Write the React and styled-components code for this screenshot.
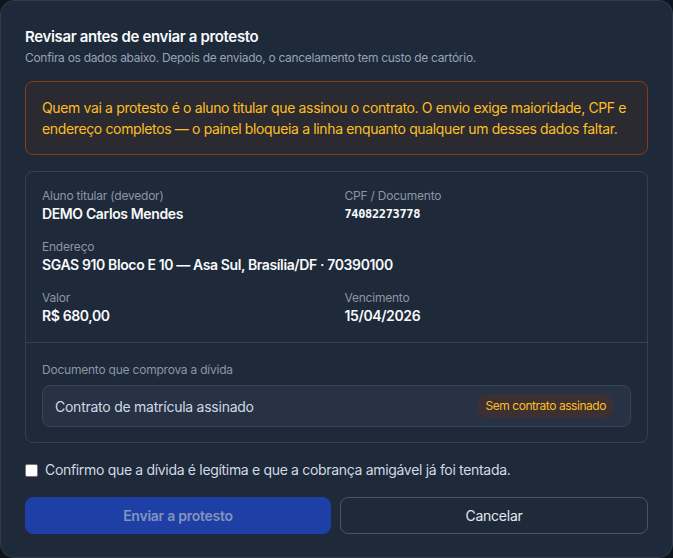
import React from "react";
import styled, { createGlobalStyle } from "styled-components";

const Global = createGlobalStyle`
  html, body {
    margin: 0;
    padding: 0;
    background: #0f141d;
  }
  body {
    font-family: Inter, "Noto Sans", sans-serif;
  }
  * { box-sizing: border-box; }
`;

const Dialog = styled.div`
  width: 673px;
  height: 558px;
  background: #1e2939;
  border: 1px solid #2f3b4d;
  border-radius: 14px;
  padding: 26px 24px 24px;
  display: flex;
  flex-direction: column;
`;

const Title = styled.h2`
  margin: 0;
  font-size: 15px;
  line-height: 20px;
  font-weight: 600;
  color: #f8fafc;
  letter-spacing: -0.35px;
`;

const Subtitle = styled.p`
  margin: 3px 0 0;
  font-size: 12px;
  line-height: 16px;
  color: #94a3b8;
  letter-spacing: -0.3px;
`;

const Warning = styled.div`
  margin-top: 15px;
  padding: 15px 8px 15px 16px;
  border: 1px solid #8a3b12;
  background: #2c2a31;
  border-radius: 8px;
  color: #fbbf24;
  font-size: 14px;
  line-height: 21px;
  letter-spacing: -0.36px;
`;

const Card = styled.div`
  margin-top: 16px;
  border: 1px solid #334155;
  border-radius: 8px;
`;

const Grid = styled.div`
  display: grid;
  grid-template-columns: 1fr 1fr;
  column-gap: 16px;
  row-gap: 15px;
  padding: 16px;
  border-bottom: 1px solid #334155;
`;

const Field = styled.div`
  grid-column: ${(p) => (p.$wide ? "1 / -1" : "auto")};
  display: flex;
  flex-direction: column;
`;

const Label = styled.span`
  font-size: 12px;
  line-height: 16px;
  color: #8a96a8;
  letter-spacing: -0.22px;
`;

const Value = styled.span`
  font-size: 14px;
  line-height: 20px;
  font-weight: 600;
  color: #f8fafc;
  letter-spacing: -0.38px;
  ${(p) =>
    p.$mono &&
    `font-family: "DejaVu Sans Mono", monospace;
     font-size: 12px;
     font-weight: 700;
     letter-spacing: -0.35px;`}
`;

const DocSection = styled.div`
  padding: 15px 16px;
`;

const DocBox = styled.div`
  margin-top: 7px;
  height: 42px;
  display: flex;
  align-items: center;
  justify-content: space-between;
  padding: 0 16px 0 12px;
  background: #273344;
  border: 1px solid #364354;
  border-radius: 8px;
`;

const DocName = styled.span`
  font-size: 14px;
  color: #d1d9e4;
  letter-spacing: -0.25px;
`;

const Badge = styled.span`
  padding: 4px 8px;
  border-radius: 999px;
  background: #3d3033;
  color: #fbbf24;
  font-size: 12px;
  line-height: 16px;
  letter-spacing: -0.45px;
`;

const Confirm = styled.label`
  margin-top: 18px;
  display: flex;
  align-items: center;
  gap: 7px;
  font-size: 14px;
  line-height: 18px;
  color: #d1d9e4;
  letter-spacing: -0.32px;
`;

const Box = styled.span`
  width: 13px;
  height: 13px;
  background: #ffffff;
  border: 1px solid #767676;
  border-radius: 2px;
  flex-shrink: 0;
`;

const Actions = styled.div`
  margin-top: 18px;
  display: grid;
  grid-template-columns: 306px 1fr;
  gap: 9px;
`;

const Button = styled.button`
  height: 37px;
  border-radius: 8px;
  font-family: inherit;
  font-size: 14px;
  letter-spacing: -0.25px;
  font-weight: ${(p) => (p.$primary ? 600 : 400)};
  background: ${(p) => (p.$primary ? "#1e40a6" : "transparent")};
  color: ${(p) => (p.$primary ? "#8393bd" : "#e2e8f0")};
  border: 1px solid ${(p) => (p.$primary ? "#1e40a6" : "#475569")};
`;

export default function App() {
  return (
    <>
      <Global />
      <Dialog>
        <Title>Revisar antes de enviar a protesto</Title>
        <Subtitle>
          Confira os dados abaixo. Depois de enviado, o cancelamento tem custo
          de cartório.
        </Subtitle>
        <Warning>
          Quem vai a protesto é o aluno titular que assinou o contrato. O envio
          exige maioridade, CPF e endereço completos — o painel bloqueia a
          linha enquanto qualquer um desses dados faltar.
        </Warning>
        <Card>
          <Grid>
            <Field>
              <Label>Aluno titular (devedor)</Label>
              <Value>DEMO Carlos Mendes</Value>
            </Field>
            <Field>
              <Label>CPF / Documento</Label>
              <Value $mono>74082273778</Value>
            </Field>
            <Field $wide>
              <Label>Endereço</Label>
              <Value>SGAS 910 Bloco E 10 — Asa Sul, Brasília/DF · 70390100</Value>
            </Field>
            <Field>
              <Label>Valor</Label>
              <Value>R$ 680,00</Value>
            </Field>
            <Field>
              <Label>Vencimento</Label>
              <Value>15/04/2026</Value>
            </Field>
          </Grid>
          <DocSection>
            <Label>Documento que comprova a dívida</Label>
            <DocBox>
              <DocName>Contrato de matrícula assinado</DocName>
              <Badge>Sem contrato assinado</Badge>
            </DocBox>
          </DocSection>
        </Card>
        <Confirm>
          <Box />
          Confirmo que a dívida é legítima e que a cobrança amigável já foi
          tentada.
        </Confirm>
        <Actions>
          <Button $primary disabled>
            Enviar a protesto
          </Button>
          <Button>Cancelar</Button>
        </Actions>
      </Dialog>
    </>
  );
}
